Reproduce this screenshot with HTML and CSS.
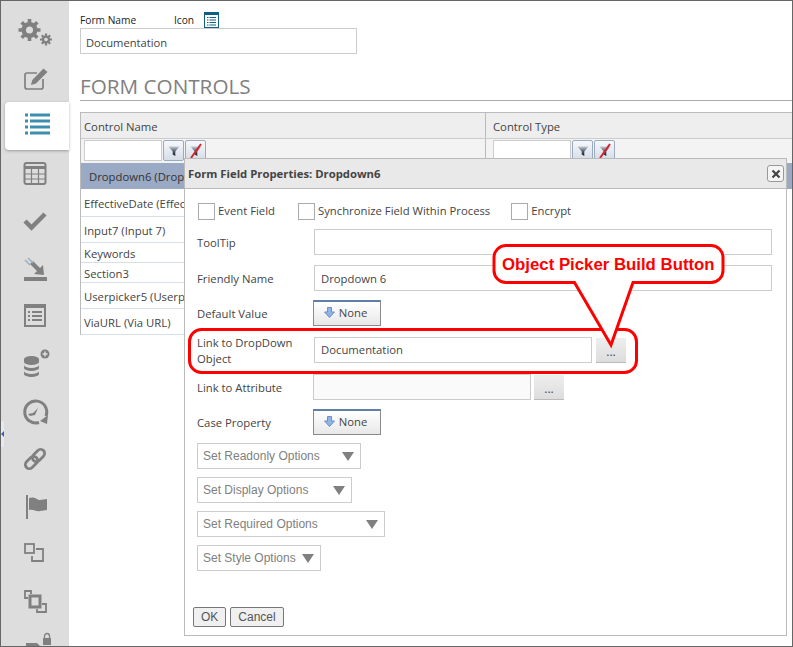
FILE: index.html
```html
<!DOCTYPE html>
<html lang="en">
<head>
<meta charset="utf-8">
<title>Form Field Properties</title>
<link rel="stylesheet" href="styles.css">
</head>
<body>
<svg class="defs" width="0" height="0"><defs><linearGradient id="funnel" x1="0" y1="0" x2="0" y2="1"><stop offset="0" stop-color="#c4ccd6"/><stop offset=".55" stop-color="#4a5664"/><stop offset="1" stop-color="#141d28"/></linearGradient></defs></svg>
<div class="app">
  <nav class="side">
    <div class="nav"><svg width="40" height="40" viewBox="0 0 40 40"><g fill="#808080"><circle cx="14.500" cy="19" r="8"/><g stroke="#808080" stroke-width="3.600"><path d="M14.500 8v22M3.500 19h22M6.700 11.200l15.600 15.600M22.300 11.200L6.700 26.800"/></g><circle cx="31" cy="28.500" r="4"/><g stroke="#808080" stroke-width="2.200"><path d="M31 22.500v12M25 28.500h12M26.800 24.300l8.400 8.400M35.200 24.300l-8.400 8.400"/></g></g><circle cx="14.500" cy="19" r="3.500" fill="#ddd"/><circle cx="31" cy="28.500" r="1.800" fill="#ddd"/></svg></div>
    <div class="nav"><svg width="40" height="40" viewBox="0 0 40 40"><path d="M22 15H12a2 2 0 0 0-2 2v12a2 2 0 0 0 2 2h14a2 2 0 0 0 2-2v-8" fill="none" stroke="#808080" stroke-width="1.700"/><path d="M16 27l1.300-5L28.500 10.500l4 3.500L21 25.500z" fill="#808080"/></svg></div>
    <div class="nav active"><svg width="40" height="40" viewBox="0 0 40 40"><path d="M8 9h3M13 9h20M8 15h3M13 15h20M8 21h3M13 21h20M8 27h3M13 27h20" stroke="#3c8db0" stroke-width="3" fill="none"/></svg></div>
    <div class="nav"><svg width="40" height="40" viewBox="0 0 40 40"><rect x="9.500" y="9" width="21" height="21" rx="2" fill="none" stroke="#808080" stroke-width="2"/><path d="M9 12h22v3H9z" fill="#808080"/><path d="M9 20h22M9 25h22M16.500 15v15M23.500 15v15" stroke="#808080" stroke-width="1.200"/></svg></div>
    <div class="nav"><svg width="40" height="40" viewBox="0 0 40 40"><path d="M10 20l6.500 6.500L30 13" fill="none" stroke="#808080" stroke-width="4.500"/></svg></div>
    <div class="nav"><svg width="40" height="40" viewBox="0 0 40 40"><path d="M9 28h23v4H9z" fill="#808080"/><path d="M29 26l-10-1 3-3-7-7 3-3 7 7 3-3z" fill="#808080"/><path d="M10 11l5 5M13 9l5 5" stroke="#9ab0c0" stroke-width="1.500"/></svg></div>
    <div class="nav"><svg width="40" height="40" viewBox="0 0 40 40"><rect x="10" y="9" width="20" height="21" fill="none" stroke="#808080" stroke-width="2"/><path d="M10 9h20v3H10z" fill="#808080"/><path d="M13 16h2M17 16h10M13 20h2M17 20h10M13 24h2M17 24h10" stroke="#808080" stroke-width="2"/></svg></div>
    <div class="nav"><svg width="40" height="40" viewBox="0 0 40 40"><g fill="#808080"><path d="M9 15a7.500 3 0 0 1 15 0v3a7.500 3 0 0 1-15 0z"/><path d="M9 21a7.500 3 0 0 0 15 0v3a7.500 3 0 0 1-15 0z"/><path d="M9 27a7.500 3 0 0 0 15 0v3a7.500 3 0 0 1-15 0z"/></g><circle cx="30" cy="10" r="4.500" fill="#808080"/><path d="M30 7.500v5M27.500 10h5" stroke="#ddd" stroke-width="1.500"/></svg></div>
    <div class="nav"><svg width="40" height="40" viewBox="0 0 40 40"><path d="M31 24a11 11 0 1 0-7 6.500" fill="none" stroke="#808080" stroke-width="3"/><path d="M33 23l-1 9-7-3z" fill="#808080"/><path d="M13 22l5-1 5-5-3 7-5 1z" fill="#808080"/></svg></div>
    <div class="nav"><svg width="40" height="40" viewBox="0 0 40 40"><g fill="none" stroke="#808080" stroke-width="2.800" transform="rotate(-45 20 20)"><rect x="8" y="16" width="14" height="8" rx="4"/><rect x="18" y="16" width="14" height="8" rx="4"/></g></svg></div>
    <div class="nav"><svg width="40" height="40" viewBox="0 0 40 40"><path d="M11 8h2v24h-2z" fill="#808080"/><path d="M14 11c6-2 8 2 11 2l7-1v11l-7 1c-4 1-6-2-11-1z" fill="#808080"/></svg></div>
    <div class="nav"><svg width="40" height="40" viewBox="0 0 40 40"><rect x="10" y="10" width="9" height="9" fill="none" stroke="#808080" stroke-width="1.800"/><path d="M21 15h7v12H17v-5" fill="none" stroke="#808080" stroke-width="1.800"/></svg></div>
    <div class="nav"><svg width="40" height="40" viewBox="0 0 40 40"><path d="M16 12v-3h-6v7h3" fill="none" stroke="#808080" stroke-width="1.800"/><rect x="15" y="14" width="10" height="11" fill="none" stroke="#808080" stroke-width="3"/><path d="M27 22h4v8h-9v-3" fill="none" stroke="#808080" stroke-width="1.800"/></svg></div>
    <div class="nav"><svg width="40" height="40" viewBox="0 0 40 40"><path d="M11 13h11l4 4v16H11z" fill="#808080"/><rect x="28" y="8" width="8" height="7" fill="#808080"/><path d="M29.500 8V6a2.500 2.500 0 0 1 5 0v2" fill="none" stroke="#808080" stroke-width="1.300"/></svg></div>
  </nav>
  <main class="main">
    <div class="labels"><span class="form-name">Form Name</span><span>Icon</span><svg class="form-icon" width="15" height="16" viewBox="0 0 15 16"><rect x=".5" y=".5" width="14" height="15" fill="#fff" stroke="#0f5f82"/><path d="M1 1h13v2H1z" fill="#0f5f82"/><path d="M3 5.500h1.500M5.500 5.500H12M3 8h1.500M5.500 8H12M3 10.500h1.500M5.500 10.500H12M3 13h1.500M5.500 13H12" stroke="#0f5f82"/></svg></div>
    <div class="name-field">Documentation</div>
    <h1 class="heading">FORM CONTROLS</h1>
    <div class="grid">
      <div class="grid-head"><div class="col-a">Control Name</div><div class="col-b">Control Type</div></div>
      <div class="grid-filter">
        <div class="col-a filter"><span class="filter-box"></span><span class="filter-btn"><svg width="12" height="12" viewBox="0 0 12 12"><path d="M.5 1.500h11L7.300 6.500V11L4.700 9.500v-3z" fill="url(#funnel)"/></svg></span><span class="filter-btn"><svg width="16" height="16" viewBox="0 0 16 16"><path d="M2.500 3.500h11L9.300 8.500V13l-2.600-1.500v-3z" fill="url(#funnel)"/><path d="M3 15L13 1" stroke="#d8232a" stroke-width="2"/></svg></span></div>
        <div class="col-b filter"><span class="filter-box"></span><span class="filter-btn"><svg width="12" height="12" viewBox="0 0 12 12"><path d="M.5 1.500h11L7.300 6.500V11L4.700 9.500v-3z" fill="url(#funnel)"/></svg></span><span class="filter-btn"><svg width="16" height="16" viewBox="0 0 16 16"><path d="M2.500 3.500h11L9.300 8.500V13l-2.600-1.500v-3z" fill="url(#funnel)"/><path d="M3 15L13 1" stroke="#d8232a" stroke-width="2"/></svg></span></div>
      </div>
      <div class="row selected tall"><span>Dropdown6 (Drop</span></div>
      <div class="row taller"><span>EffectiveDate (Effec</span></div>
      <div class="row tall"><span>Input7 (Input 7)</span></div>
      <div class="row short"><span>Keywords</span></div>
      <div class="row short"><span>Section3</span></div>
      <div class="row tall"><span>Userpicker5 (Userp</span></div>
      <div class="row tall"><span>ViaURL (Via URL)</span></div>
    </div>
  </main>
</div>

<span class="handle"><i class="handle-arrow"></i></span>

<section class="dialog">
  <header class="dialog-title"><span>Form Field Properties: Dropdown6</span><span class="close"><svg width="10" height="10" viewBox="0 0 10 10"><path d="M1.500 1.500l7 7M8.500 1.500l-7 7" stroke="#444" stroke-width="2.200"/></svg></span></header>
  <div class="dialog-body">
    <div class="checks">
      <span class="check first"><i class="box"></i>Event Field</span>
      <span class="check"><i class="box"></i>Synchronize Field Within Process</span>
      <span class="check"><i class="box"></i>Encrypt</span>
    </div>
    <div class="field"><label class="lbl">ToolTip</label><div class="input wide"></div></div>
    <div class="field"><label class="lbl">Friendly Name</label><div class="input wide">Dropdown 6</div></div>
    <div class="field btn-field"><label class="lbl">Default Value</label><span class="none-btn"><svg width="11" height="11" viewBox="0 0 11 11"><path d="M3.500.5h4v4.500h3L5.500 10.500.5 5h3z" fill="#8fb4e6" stroke="#6d8fc4"/></svg>None</span></div>
    <div class="field link-field"><label class="lbl">Link to DropDown Object</label><div class="input mid">Documentation</div><span class="dots">...</span></div>
    <div class="field attr-field"><label class="lbl">Link to Attribute</label><div class="input attr"></div><span class="dots">...</span></div>
    <div class="field case-field"><label class="lbl">Case Property</label><span class="none-btn"><svg width="11" height="11" viewBox="0 0 11 11"><path d="M3.500.5h4v4.500h3L5.500 10.500.5 5h3z" fill="#8fb4e6" stroke="#6d8fc4"/></svg>None</span></div>
    <div class="opts">
      <div class="opt w-ro">Set Readonly Options<i class="tri"></i></div>
      <div class="opt w-di">Set Display Options<i class="tri"></i></div>
      <div class="opt w-re">Set Required Options<i class="tri"></i></div>
      <div class="opt w-st">Set Style Options<i class="tri"></i></div>
    </div>
    <div class="actions"><span class="act">OK</span><span class="act">Cancel</span></div>
  </div>
</section>

<svg class="callout" width="793" height="647" viewBox="0 0 793 647">
  <rect x="189.500" y="329.500" width="447" height="43" rx="12" fill="none" stroke="#f00" stroke-width="3"/>
  <path d="M506 245.500H711a12 12 0 0 1 12 12v13a12 12 0 0 1-12 12H633L611 345 574.500 282.500H506a12 12 0 0 1-12-12v-13a12 12 0 0 1 12-12z" fill="#fff" stroke="#f00" stroke-width="3"/>
  <text x="502" y="270" class="callout-text">Object Picker Build Button</text>
</svg>
</body>
</html>
```
FILE: styles.css
```css
* { box-sizing: border-box; }
html, body { margin: 0; height: 100%; overflow: hidden; background: #fff; }
body { font-family: "Open Sans", "Noto Sans", sans-serif; font-size: 12px; color: #444; }
.defs { position: absolute; }

.app { display: flex; width: 793px; height: 647px; border: 1px solid #666; overflow: hidden; }

.side { width: 68px; flex: none; background: #ddd; padding: 6px 0 0 4px; display: flex; flex-direction: column; }
.nav { height: 47.600px; flex: none; display: flex; align-items: center; justify-content: center; padding-right: 4px; }
.nav.active { background: #fff; border-radius: 4px 0 0 4px; box-shadow: 0 1px 3px rgba(0,0,0,.3); padding-right: 0; }

.main { flex: 1; padding: 10px 0 0 11px; min-width: 0; }
.labels { display: flex; align-items: center; height: 17px; font-size: 10.200px; color: #222; }
.form-name { width: 94px; }
.form-icon { margin-left: 10px; }
.name-field { width: 277px; height: 26px; border: 1px solid #ccc; padding: 1px 5px 0; line-height: 25px; font-size: 11.200px; color: #444; }
.heading { margin: 20px 0 0; height: 27px; font-size: 20.700px; line-height: 24px; font-weight: 400; color: #808080; border-bottom: 1px solid #aaa; }

.grid { margin-top: 11px; width: 720px; border-left: 1px solid #bbb; border-top: 1px solid #bbb; }
.grid-head { display: flex; height: 26px; background: #eee; border-bottom: 1px solid #ccc; padding-top: 1px; line-height: 25px; font-size: 11.300px; }
.col-a { width: 404px; flex: none; padding-left: 3px; }
.col-b { flex: 1; border-left: 1px solid #bbb; padding-left: 7px; margin-top: -1px; padding-top: 1px; }
.grid-filter { display: flex; height: 24px; background: #f3f3f3; }
.grid-filter .col-b { margin-top: 0; }
.filter { display: flex; gap: 1px; align-items: flex-start; padding-top: 1px; }
.filter-box { width: 78px; height: 21px; background: #fff; border: 1px solid #ccc; }
.filter-btn { width: 21px; height: 21px; display: flex; align-items: center; justify-content: center; border: 1px solid #9aaac0; border-radius: 2px; background: linear-gradient(#f6f8fb, #d6dde8); }
.row { border-bottom: 1px solid #d6dfea; padding: 1px 0 0 3px; font-size: 11.300px; white-space: nowrap; display: flex; align-items: center; width: 404px; }
.tall { height: 26px; }
.taller { height: 28px; }
.short { height: 20px; }
.selected { background: #9aa9c4; width: 720px; border-bottom: 0; padding: 0 0 0 8px; color: #333; }

.handle { position: absolute; left: 1px; top: 421px; width: 3px; height: 26px; background: #e4e9f2; }
.handle-arrow { position: absolute; left: 0; top: 10px; width: 0; height: 0; border: 3px solid transparent; border-left-width: 0; border-right-color: #3a66b0; }

.dialog { position: absolute; left: 184px; top: 158px; width: 603px; height: 478px; background: #fff; border: 1px solid #bbb; }
.dialog-title { height: 30px; background: #e9e9e9; border-bottom: 1px solid #bbb; display: flex; align-items: center; justify-content: space-between; padding: 0 2px 0 3px; font-weight: 700; font-size: 11.300px; color: #444; }
.close { width: 17px; height: 17px; display: flex; align-items: center; justify-content: center; background: #f5f5f5; border: 1px solid #999; border-radius: 3px; }
.dialog-body { padding: 14px 0 0 12px; font-size: 11.300px; }

.checks { display: flex; height: 26px; padding-left: 1px; }
.check { display: flex; align-items: flex-start; line-height: 16px; margin-right: 21px; }
.check.first { margin-right: 23px; }
.box { display: block; width: 17px; height: 17px; margin-right: 3px; border: 1px solid #aaa; background: #fff; }

.field { display: flex; align-items: center; height: 26px; margin-top: 10px; }
.checks + .field { margin-top: 0; }
.lbl { width: 117px; flex: none; line-height: 16px; padding: 2px 12px 0 0; color: #444; }
.input { height: 26px; border: 1px solid #ccc; padding: 0 6px; line-height: 25px; color: #444; }
.wide { width: 458px; }
.mid { width: 278px; line-height: 24px; }
.attr { width: 218px; margin-left: -1px; background: #fafafa; }
.dots { width: 30px; height: 25px; margin-left: 4px; background: linear-gradient(#eee, #ddd); border-bottom: 1px solid #bbb; text-align: center; line-height: 27px; color: #446; font-size: 12px; }
.attr-field .dots { margin-left: 3px; }
.btn-field { margin-top: 9px; }
.link-field { margin-top: 11px; }
.attr-field { margin-top: 11px; }
.case-field { margin-top: 9px; }
.none-btn { width: 68px; height: 26px; margin-left: -1px; padding: 0 3px 3px 0; display: flex; align-items: center; justify-content: center; gap: 4px; border: 1px solid #8a8a8a; border-top: 2px solid #5f7fa8; background: linear-gradient(#fff, #e8e8e8); color: #444; }

.opts { display: flex; flex-direction: column; gap: 8px; margin-top: 8px; align-items: flex-start; }
.opt { height: 26px; border: 1px solid #ccc; padding: 0 5px; display: flex; align-items: center; justify-content: space-between; font-family: "Liberation Sans", Arial, sans-serif; font-size: 12px; color: #808080; }
.w-ro { width: 164px; }
.w-di { width: 155px; }
.w-re { width: 188px; }
.w-st { width: 124px; }
.tri { width: 0; height: 0; border-left: 6px solid transparent; border-right: 6px solid transparent; border-top: 9px solid #808080; margin-right: 1px; }

.actions { display: flex; gap: 4px; margin: 36px 0 0 -4px; }
.act { height: 20px; padding: 0 7px; border: 1px solid #777; border-radius: 2px; background: #f0f0f0; line-height: 18px; color: #555; font-size: 12px; font-family: "Liberation Sans", Arial, sans-serif; }

.callout { position: absolute; left: 0; top: 0; pointer-events: none; }
.callout-text { font-family: "Liberation Sans", Arial, sans-serif; font-size: 16.800px; font-weight: 700; fill: #f00; }
```
